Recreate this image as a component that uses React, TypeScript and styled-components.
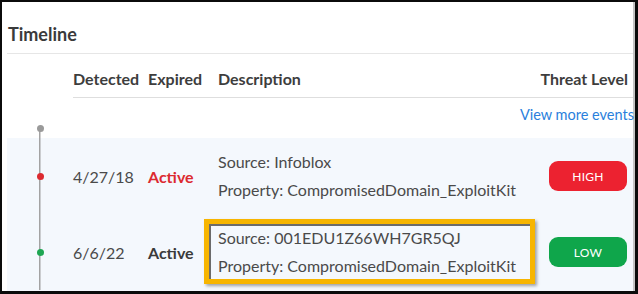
import React from "react";
import styled, { createGlobalStyle, css } from "styled-components";

const Global = createGlobalStyle`
  html, body { margin: 0; padding: 0; background: #ffffff; }
  body { font-family: Lato, "Open Sans", "Liberation Sans", sans-serif; }
  *, *::before, *::after { box-sizing: border-box; }
`;

const Frame = styled.div`
  width: 638px;
  height: 294px;
  border-style: solid;
  border-color: #0b0b0b;
  border-width: 2px 3px 3px 2px;
  overflow: hidden;
  background: #ffffff;
`;

const Panel = styled.div`
  height: 100%;
  padding-left: 5px;
  border-right: 2px solid #c4c4c4;
  display: flex;
  flex-direction: column;
`;

const Title = styled.h2`
  margin: 0;
  height: 52px;
  padding: 21px 0 0 1px;
  font-size: 18px;
  line-height: 22px;
  font-weight: 700;
  color: #3a3a3a;
  border-bottom: 1px solid #e6e6e6;
`;

const Grid = styled.div`
  display: grid;
  grid-template-columns: 66px 75px 70px 1fr 85px;
`;

const HeaderRow = styled(Grid)`
  height: 44px;
`;

const HeadCell = styled.div<{ $right?: boolean }>`
  display: flex;
  justify-content: ${(p) => (p.$right ? "flex-end" : "flex-start")};
  padding-top: 16px;
  padding-right: ${(p) => (p.$right ? "5px" : "0")};
  font-size: 16px;
  line-height: 18px;
  font-weight: 700;
  color: #3d3d3d;
  white-space: nowrap;
  border-bottom: 1px solid #dedede;
`;

const Blank = styled.div``;

const MoreRow = styled(Grid)`
  height: 40px;
`;

const MoreLink = styled.a`
  grid-column: 2 / 6;
  justify-self: end;
  padding-top: 8px;
  margin-right: -1px;
  font-size: 14.5px;
  line-height: 18px;
  color: #2a7fdc;
  text-decoration: none;
  cursor: pointer;
`;

const Gutter = styled.div<{ $start?: boolean }>`
  display: flex;
  justify-content: center;
  align-items: ${(p) => (p.$start ? "flex-start" : "center")};
  padding-top: ${(p) => (p.$start ? "27px" : "0")};
  background-image: linear-gradient(#a3a3a3, #a3a3a3);
  background-repeat: no-repeat;
  background-size: ${(p) => (p.$start ? "1.5px calc(100% - 31px)" : "1.5px 100%")};
  background-position: center bottom;
`;

const Dot = styled.span<{ $color: string }>`
  width: 7px;
  height: 7px;
  border-radius: 50%;
  background: ${(p) => p.$color};
`;

const Body = styled.div`
  flex: 1;
  background: #f4f8fd;
`;

const Row = styled(Grid)`
  height: 76px;
  align-items: stretch;
`;

const Cell = styled.div`
  display: flex;
  align-items: center;
  font-size: 16px;
  color: #4a4a4a;
`;

const Status = styled(Cell)<{ $color: string }>`
  font-weight: 700;
  color: ${(p) => p.$color};
`;

const DescCell = styled.div`
  display: flex;
  align-items: center;
`;

const Desc = styled.div<{ $highlight?: boolean }>`
  position: relative;
  font-size: 16px;
  line-height: 28px;
  color: #4a4a4a;
  white-space: nowrap;
  ${(p) =>
    p.$highlight &&
    css`
      &::after {
        content: "";
        position: absolute;
        left: -14px;
        top: -5px;
        width: 331px;
        height: 65px;
        border: 5px solid #f7b500;
        box-shadow: inset 1px 1px 0 1px #6b6b6b, 2px 2px 3px rgba(0, 0, 0, 0.35);
        pointer-events: none;
      }
    `}
`;

const BadgeCell = styled.div`
  display: flex;
  align-items: center;
  justify-content: flex-end;
  padding-right: 6px;
`;

const Badge = styled.span<{ $bg: string }>`
  width: 78px;
  height: 30px;
  border-radius: 9px;
  background: ${(p) => p.$bg};
  color: #ffffff;
  font-size: 12px;
  display: flex;
  align-items: center;
  justify-content: center;
  letter-spacing: 0.2px;
`;

type Event = {
  date: string;
  status: string;
  statusColor: string;
  source: string;
  property: string;
  level: string;
  levelColor: string;
  dot: string;
  highlight?: boolean;
};

const events: Event[] = [
  {
    date: "4/27/18",
    status: "Active",
    statusColor: "#dc2a30",
    source: "Source: Infoblox",
    property: "Property: CompromisedDomain_ExploitKit",
    level: "HIGH",
    levelColor: "#ec2230",
    dot: "#dc2a30",
  },
  {
    date: "6/6/22",
    status: "Active",
    statusColor: "#3a3a3a",
    source: "Source: 001EDU1Z66WH7GR5QJ",
    property: "Property: CompromisedDomain_ExploitKit",
    level: "LOW",
    levelColor: "#0fa64b",
    dot: "#1ea653",
    highlight: true,
  },
];

export default function App() {
  return (
    <>
      <Global />
      <Frame>
        <Panel>
          <Title>Timeline</Title>
          <HeaderRow>
            <Blank />
            <HeadCell>Detected</HeadCell>
            <HeadCell>Expired</HeadCell>
            <HeadCell>Description</HeadCell>
            <HeadCell $right>Threat Level</HeadCell>
          </HeaderRow>
          <MoreRow>
            <Gutter $start>
              <Dot $color="#9a9a9a" />
            </Gutter>
            <MoreLink>View more events</MoreLink>
          </MoreRow>
          <Body>
            {events.map((e) => (
              <Row key={e.date}>
                <Gutter>
                  <Dot $color={e.dot} />
                </Gutter>
                <Cell>{e.date}</Cell>
                <Status $color={e.statusColor}>{e.status}</Status>
                <DescCell>
                  <Desc $highlight={e.highlight}>
                    <div>{e.source}</div>
                    <div>{e.property}</div>
                  </Desc>
                </DescCell>
                <BadgeCell>
                  <Badge $bg={e.levelColor}>{e.level}</Badge>
                </BadgeCell>
              </Row>
            ))}
          </Body>
        </Panel>
      </Frame>
    </>
  );
}
